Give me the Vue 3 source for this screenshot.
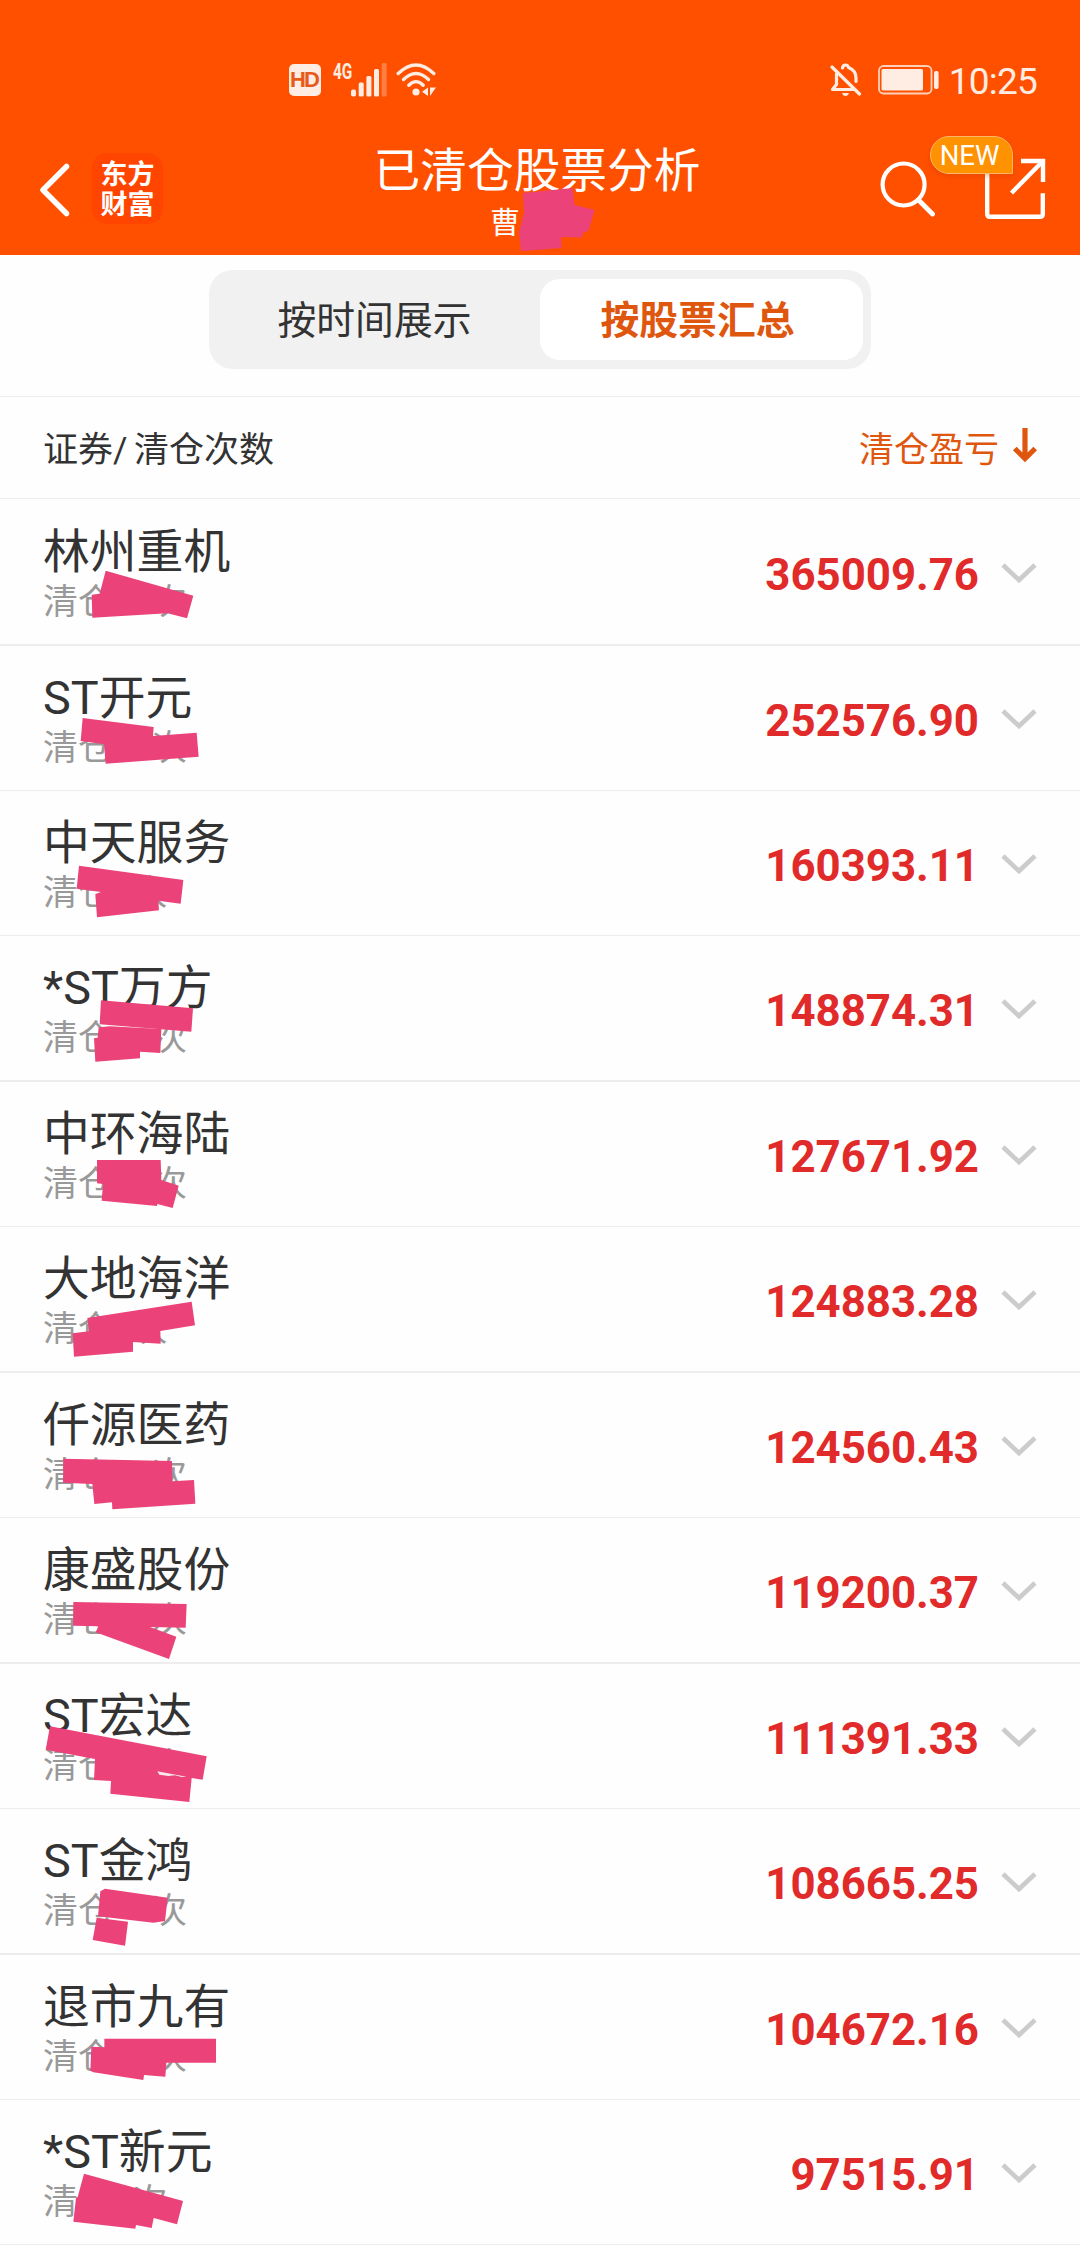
<script setup>
const stocks = [
  { name: '林州重机', value: '365009.76', digits: 2, thick: true, masks: ['317,212 580,287 561,355 503,340 277,353 275,284 299,281'] },
  { name: 'ST开元', value: '252576.90', digits: 2, masks: ['248,216 461,243 459,270 590,260 596,332 317,353 312,295 242,285'] },
  { name: '中天服务', value: '160393.11', digits: 1, masks: ['237,224 550,267 542,338 475,329 477,358 291,379 286,309 303,303 230,293'] },
  { name: '*ST万方', value: '148874.31', digits: 2, thick: true, masks: ['303,193 579,217 574,287 299,265', '296,274 330,271 484,279 481,351 420,347 420,367 286,377 282,307 293,305'] },
  { name: '中环海陆', value: '127671.92', digits: 2, masks: ['291,234 482,234 484,294 536,311 518,378 472,366 471,372 305,356 309,306 291,304'] },
  { name: '大地海洋', value: '124883.28', digits: 1, thick: true, masks: ['262,273 575,224 585,295 481,312 482,350 399,345 399,374 222,389 218,319 267,313'] },
  { name: '仟源医药', value: '124560.43', digits: 2, masks: ['190,257 516,264 517,325 582,321 586,392 337,409 336,388 283,393 277,333 189,329'] },
  { name: '康盛股份', value: '119200.37', digits: 2, thick: true, masks: ['220,252 560,258 557,329 450,327 529,356 507,423 287,343 295,325 219,323'] },
  { name: 'ST宏达', value: '111391.33', digits: 2, masks: ['150,187 620,277 608,347 575,342 568,414 331,389 333,351 282,348 285,285 137,257'], gap: '472,322 560,338 545,339 525,334 505,336 478,332' },
  { name: 'ST金鸿', value: '108665.25', digits: 2, thick: true, masks: ['301,247 315,239 503,266 495,336 460,341 294,322', '290,326 384,338 375,410 278,393'] },
  { name: '退市九有', value: '104672.16', digits: 2, masks: ['313,251 648,251 648,323 499,323 496,365 432,360 430,375 280,352 271,347 274,275 313,277'] },
  { name: '*ST新元', value: '97515.91', digits: 1, masks: ['252,221 549,303 531,373 461,354 455,384 408,375 406,386 220,365 228,293 233,291'] },
]
</script>

<template>
  <main class="screen">
    <header class="header">
      <div class="status">
        <div class="status-left">
          <span class="hd">HD</span>
          <span class="net">4G</span>
          <svg class="signal" width="36" height="34" viewBox="0 0 36 34">
            <rect x="0" y="26.5" width="5" height="7" rx="2" />
            <rect x="7.7" y="19.5" width="5" height="14" rx="1.5" />
            <rect x="15.4" y="13" width="5" height="20.5" rx="1.5" />
            <rect x="23" y="6" width="5" height="27.5" rx="1.5" />
            <rect x="30.7" y="0" width="5" height="33.5" rx="1.5" opacity=".3" />
          </svg>
          <svg class="wifi" width="42" height="34" viewBox="0 0 42 34">
            <g fill="none" stroke="#ffece2" stroke-width="3.4" stroke-linecap="round">
              <path d="M2.200 10.500Q20 -6.500 37.800 10.500" />
              <path d="M7.500 16.500Q20 4.500 32.500 16.500" />
              <path d="M12.800 22.300Q20 15 27.200 22.300" />
            </g>
            <circle cx="20" cy="29" r="3.600" />
            <path d="M32 24.500V33L26 28.800ZM34 24.500H40L34 33Z" />
          </svg>
        </div>
        <div class="status-right">
          <svg class="bell" width="32" height="34" viewBox="0 0 32 34">
            <g fill="none" stroke="#ffece2" stroke-width="3.200" stroke-linecap="round" stroke-linejoin="round">
              <path d="M2 4 29.500 31" />
              <path d="M6.500 11V21.500L2.500 26.500H24" />
              <path d="M12.500 5Q13 2 15.500 2T18.500 4.500Q26 7.500 26 15V18.500" />
            </g>
            <path d="M12 30H19Q18 33 15.500 33T12 30Z" />
          </svg>
          <svg class="battery" width="62" height="30" viewBox="0 0 62 30">
            <rect x="1" y="1" width="52.500" height="27.500" rx="4.500" fill="none" stroke="#ffcfb8" stroke-width="1.800" />
            <rect x="3.500" y="4" width="41.500" height="21.500" rx="1.500" />
            <rect x="56" y="6" width="4.600" height="18" rx="2" />
          </svg>
          <time class="time">10:25</time>
        </div>
      </div>

      <nav class="nav">
        <div class="nav-left">
          <svg class="back" width="32" height="54" viewBox="0 0 32 54">
            <path d="M27.500 3.500 4 27 27.500 50.500" fill="none" stroke="#fff" stroke-width="5.500" stroke-linejoin="round" stroke-linecap="round" />
          </svg>
          <div class="logo"><span>东方</span><span>财富</span></div>
        </div>
        <div class="heading">
          <h1>已清仓股票分析</h1>
          <div class="owner">曹</div>
          <svg class="owner-mask" width="80" height="66" viewBox="517 186 80 66">
            <path d="M523 193 572.500 188 574.500 205 594.500 210 588.500 231 583 232.500 582 237.500 561 237 561.500 248 521 251 519 232 524 213Z" fill="#eb4279" />
          </svg>
        </div>
        <div class="nav-right">
          <svg class="search" width="56" height="58" viewBox="879 160 56 58" fill="none" stroke="#fff" stroke-linecap="round">
            <circle cx="903.600" cy="184.500" r="21" stroke-width="4.200" />
            <path d="M918.500 200 932.500 214" stroke-width="4.800" />
          </svg>
          <div class="share">
            <svg width="62" height="62" viewBox="984 158 62 62" fill="none" stroke="#fff" stroke-width="4.400">
              <path d="M987.200 168V214Q987.200 216.800 990 216.800H1040Q1042.800 216.800 1042.800 214V193.300" />
              <path d="M1021 161H1043V182" />
              <path d="M1042 162 1011.500 193" />
            </svg>
            <span class="badge">NEW</span>
          </div>
        </div>
      </nav>
    </header>

    <section class="tabs-wrap">
      <div class="tabs">
        <button class="tab">按时间展示</button>
        <button class="tab active">按股票汇总</button>
      </div>
    </section>

    <section class="columns">
      <span class="label">证券/ 清仓次数</span>
      <span class="sort">
        <span class="label">清仓盈亏</span>
        <svg width="26" height="36" viewBox="0 0 26 36">
          <path d="M13 1V32M2.800 21.500 13 31.500 23.200 21.500" fill="none" stroke="#df570e" stroke-width="5.200" />
        </svg>
      </span>
    </section>

    <ul class="list">
      <li v-for="s in stocks" :key="s.name" class="row" :class="{ thick: s.thick }">
        <div class="info">
          <div class="name">{{ s.name }}</div>
          <div class="count">清仓<i :class="'digits-' + s.digits"></i>次</div>
        </div>
        <div class="amount">{{ s.value }}</div>
        <svg class="chevron" width="36" height="22" viewBox="0 0 36 22">
          <path d="M2 3 18 18 34 3" fill="none" stroke="#cccccc" stroke-width="4.600" />
        </svg>
        <svg class="mask" width="300" height="144" viewBox="0 0 900 432">
          <polygon v-for="m in s.masks" :key="m" :points="m" fill="#eb4279" />
          <polygon v-if="s.gap" :points="s.gap" fill="#fbe6ee" />
        </svg>
      </li>
    </ul>
  </main>
</template>

<style>
body {
  margin: 0;
  background: #fefefe;
}
</style>

<style scoped>
.screen {
  width: 1080px;
  height: 2249px;
  overflow: hidden;
  background: #fefefe;
  color: #333;
  font-family: Roboto, "Noto Sans CJK SC", sans-serif;
}
.header {
  height: 255px;
  background: #ff5000;
  color: #fff;
}
.status {
  display: flex;
  justify-content: space-between;
  height: 112px;
  box-sizing: border-box;
  padding: 63px 43px 0 289px;
  color: #ffece2;
  fill: #ffece2;
}
.status-left,
.status-right {
  display: flex;
  align-items: flex-start;
}
.hd {
  width: 32px;
  height: 32px;
  margin-top: 1px;
  border-radius: 5px;
  background: #ffece2;
  color: #e85a1c;
  font: 700 22px/32px "Liberation Sans", sans-serif;
  letter-spacing: -2px;
  text-indent: -2px;
  text-align: center;
}
.net {
  width: 17px;
  margin-left: 12px;
  font: 700 22px/17px Roboto, sans-serif;
  transform: scaleX(.7);
  transform-origin: left;
}
.signal {
  margin-left: 1px;
}
.wifi {
  margin-left: 9px;
}
.battery {
  margin: 2px 0 0 16px;
}
.time {
  margin-left: 9px;
  font-size: 37px;
  line-height: 38px;
  letter-spacing: -.8px;
}
.nav {
  display: grid;
  grid-template-columns: 340px 395px 1fr;
  height: 143px;
}
.nav-left {
  display: flex;
  align-items: flex-start;
  padding: 41px 0 0 39px;
}
.back {
  margin-top: 10px;
}
.logo {
  display: flex;
  flex-direction: column;
  align-items: center;
  width: 71px;
  height: 71px;
  box-sizing: border-box;
  margin-left: 21px;
  padding-top: 7px;
  border-radius: 15px;
  background: #ff4500;
  font-size: 27px;
  font-weight: 700;
  line-height: 30px;
}
.heading {
  position: relative;
  text-align: center;
}
.heading h1 {
  margin: 29px 1px 0 0;
  font-size: 46.7px;
  font-weight: 400;
  line-height: 60px;
}
.owner {
  margin: 4px 0 0 150px;
  font-size: 30px;
  line-height: 36px;
  text-align: left;
}
.owner-mask {
  position: absolute;
  left: 177px;
  top: 74px;
}
.nav-right {
  display: flex;
  align-items: flex-start;
  padding: 46px 0 0 144px;
}
.search {
  margin-top: 2px;
}
.share {
  position: relative;
  margin-left: 49px;
}
.share svg {
  display: block;
}
.badge {
  position: absolute;
  left: -54px;
  top: -22px;
  width: 83px;
  height: 38px;
  box-sizing: border-box;
  padding-right: 4px;
  border: 1px solid #ffb765;
  border-radius: 20px 20px 0 20px;
  background: #ff9200;
  box-shadow: 0 2px 5px rgba(190, 60, 0, .35);
  font-size: 27.500px;
  line-height: 38px;
  text-align: center;
}
.tabs-wrap {
  display: flex;
  justify-content: center;
  height: 142px;
  box-sizing: border-box;
  padding-top: 15px;
  border-bottom: 1px solid #ededed;
}
.tabs {
  display: flex;
  width: 662px;
  height: 99px;
  box-sizing: border-box;
  padding: 9px 8px;
  border-radius: 24px;
  background: #f1f1f1;
}
.tab {
  flex: 1;
  padding: 3px 8px 0 0;
  border: 0;
  border-radius: 20px;
  background: none;
  color: #333;
  font: 400 38.800px/78px Roboto, "Noto Sans CJK SC", sans-serif;
}
.tab.active {
  background: #fff;
  color: #df570e;
  font-weight: 700;
}
.columns {
  display: flex;
  align-items: center;
  justify-content: space-between;
  height: 102px;
  box-sizing: border-box;
  padding: 0 42px 0 43px;
  border-bottom: 1px solid #ededed;
  font-size: 35px;
}
.label {
  padding-bottom: 2px;
  word-spacing: -2px;
}
.sort {
  display: flex;
  align-items: center;
  gap: 13px;
  color: #df570e;
}
.sort svg {
  margin-top: -5px;
}
.list {
  margin: 0;
  padding: 1px 0 0;
  list-style: none;
}
.row {
  position: relative;
  display: flex;
  align-items: center;
  height: 144px;
  padding: 0 43px 0 43px;
  border-bottom: 1px solid #ededed;
}
.row.thick {
  border-bottom-width: 2px;
}
.info {
  flex: 1;
  padding-top: 7px;
}
.name {
  font-size: 46.800px;
  line-height: 54px;
}
.count {
  color: #999;
  font-size: 35px;
  line-height: 47px;
}
.digits-1,
.digits-2 {
  display: inline-block;
  width: 19.500px;
}
.digits-2 {
  width: 39px;
}
.amount {
  padding-top: 5px;
  color: #e12a2a;
  font-size: 43.800px;
  font-weight: 700;
  line-height: 50px;
}
.chevron {
  margin: 1px 0 0 22px;
}
.mask {
  position: absolute;
  left: 0;
  top: 0;
}
</style>
